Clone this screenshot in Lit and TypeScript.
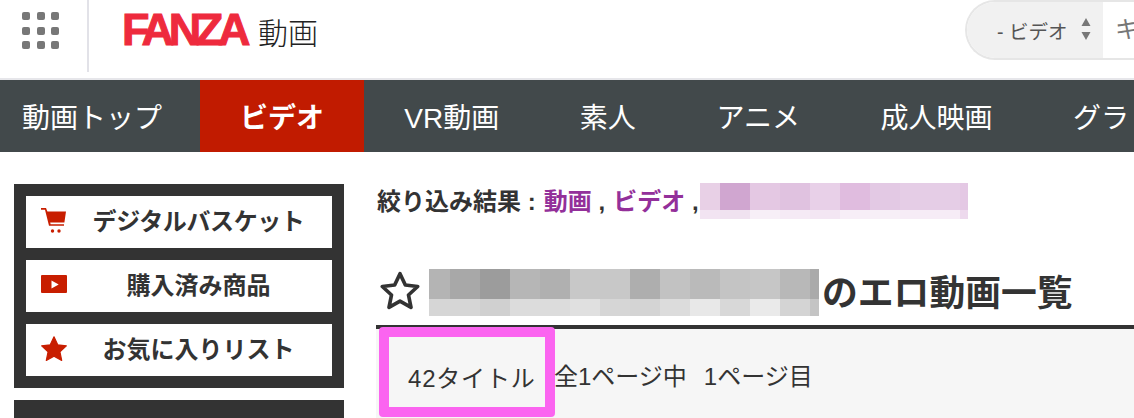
import { LitElement, html, css, svg } from "lit";
import { customElement } from "lit/decorators.js";

const greyTop = ["#b4b4b4","#a8a8a8","#9c9c9c","#b6b6b6","#b0b0b0","#c8c8c8","#c8c8c8","#aeaeae","#c2c2c2","#bababa","#c4c4c4","#c6c6c6","#b8b8b8","#aaaaaa"];
const greyBot = ["#d6d6d6","#d6d6d6","#d0d0d0","#dcdcdc","#dcdcdc","#e0e0e0","#d6d6d6","#d4d4d4","#dcdcdc","#e8e8e8","#d8d8d8","#eaeaea","#d4d4d4","#c4c4c4"];
const greyW = [21,30,30,30,30,30,30,30,30,30,30,30,30,9];
const purpTop = ["#e8d0e6","#d0a6d0","#e4c8e3","#e0c2e0","#e8d0e8","#e0bcdf","#e3c9e4","#e5cde6","#e5cde6","#e4c8e4"];
const purpBot = ["#f2e4f2","#f0e2f0","#f7eff7","#f5eaf5","#f3e6f3","#f7eef7","#f7eff7","#f6ecf6","#f6ecf6","#edd9ed"];
const purpW = [20,30,30,30,30,30,30,30,30,8];

const navItems = ["動画トップ","ビデオ","VR動画","素人","アニメ","成人映画","グラ"];

const starPts = "12,1.6 15.2,8.4 22.6,9.3 17.1,14.4 18.6,21.8 12,18.1 5.4,21.8 6.9,14.4 1.4,9.3 8.8,8.4";

@customElement("app-root")
export class AppRoot extends LitElement {
  static styles = css`
    :host { display: block; width: 1134px; height: 418px; overflow: hidden; background: #fff; font-family: "Liberation Sans", "Noto Sans CJK JP", sans-serif; color: #333; }
    .top { display: flex; align-items: flex-start; height: 78px; border-bottom: 2px solid #e6e6ea; }
    .apps { display: grid; grid-template-columns: repeat(3, 8px); gap: 6.5px; margin: 12px 28px 0 22px; }
    .apps i { width: 8px; height: 8px; border-radius: 2px; background: #777; display: block; }
    .vline { width: 2px; height: 72px; background: #e2e2e8; }
    .logo { display: flex; align-items: center; margin: 6px 0 0 33px; height: 48px; }
    .fanza { width: 125px; font-weight: 700; font-size: 45px; line-height: 48px; letter-spacing: -5.4px; color: #ee2a3d; -webkit-text-stroke: 1px #ee2a3d; white-space: nowrap; }
    .svc { margin-left: 11px; padding-top: 8px; font-size: 30px; line-height: 48px; font-weight: 300; color: #222; white-space: nowrap; }
    .search { margin-left: auto; display: flex; width: 169px; height: 60px; flex: none; box-sizing: border-box; border: 2px solid #e6e6e6; border-right: 0; border-radius: 30px 0 0 30px; overflow: hidden; }
    .sel { flex: none; width: 136px; background: #f1f1f1; display: flex; align-items: center; padding-left: 30px; box-sizing: border-box; font-size: 19.5px; color: #555; white-space: nowrap; gap: 14px; }
    .sel svg { display: block; flex: none; margin-top: -3px; }
    .kw { flex: none; width: 31px; padding-left: 12px; box-sizing: border-box; font-size: 24px; line-height: 56px; color: #777; white-space: nowrap; }
    nav { display: flex; height: 72px; background: #42494b; overflow: hidden; }
    nav a { flex: none; display: flex; align-items: center; padding: 0 40.3px; font-size: 28px; color: #fff; white-space: nowrap; }
    nav a:first-child { padding-left: 22px; padding-right: 38px; }
    nav a.on { background: #c11b00; font-weight: 700; padding: 0 40px; }
    .body { display: flex; gap: 32px; padding-left: 14px; }
    .side { flex: none; width: 330px; margin-top: 32px; display: flex; flex-direction: column; gap: 12px; }
    .box { background: #333; padding: 12px; display: flex; flex-direction: column; gap: 12px; }
    .box.next { height: 60px; }
    .row { background: #fff; height: 52px; display: flex; align-items: center; padding-left: 14px; }
    .ic { flex: none; width: 28px; height: 28px; display: block; }
    .ic.st { margin-top: -3px; }
    .row span { flex: 1; margin-left: -3px; text-align: center; font-size: 24px; font-weight: 700; color: #333; line-height: 51px; height: 52px; white-space: nowrap; }
    .row span.tight { letter-spacing: -0.4px; }
    .main { flex: 1; min-width: 0; padding-top: 31px; }
    .filter { display: flex; align-items: center; height: 36px; line-height: 38px; font-size: 24px; font-weight: 700; white-space: pre; padding-left: 1px; }
    .filter b { color: #93309a; font-weight: 700; margin-left: 1.5px; }
    .filter span { align-self: flex-start; }
    .mosaic { display: flex; flex-direction: column; flex: none; }
    .mosaic div { display: flex; }
    .mosaic i { display: block; height: 100%; flex: none; }
    .m-p { margin-left: 1px; }
    .m-p .a { height: 27px; } .m-p .b { height: 9px; }
    .m-g .a { height: 30px; } .m-g .b { height: 17px; }
    h1 { margin: 50px 0 0; display: flex; align-items: center; height: 47px; padding: 0 0 9px 4px; border-bottom: 4px solid #333; font-size: 35.8px; font-weight: 700; color: #333; white-space: nowrap; }
    h1 svg { flex: none; width: 40px; height: 40px; margin: -4px 9px 0 0; }
    h1 em { font-style: normal; margin: -6px 0 0 3px; }
    .info { display: flex; background: #f6f6f6; height: 100px; font-size: 24px; color: #333; white-space: pre; }
    .hl { flex: none; box-sizing: border-box; width: 176px; height: 90px; margin: -2px -1px 0 3px; border: 10px solid #fb64f0; border-radius: 4px; display: flex; align-items: center; padding: 8px 0 0 19px; letter-spacing: 0.8px; }
    .pages { margin-top: 30px; height: 36px; line-height: 36px; word-spacing: 1.8px; }
  `;

  private mosaic(cls: string, top: string[], bot: string[], w: number[]) {
    const row = (c: string, cols: string[]) => html`<div class=${c}>${cols.map((b, i) => html`<i style="width:${w[i]}px;background:${b}"></i>`)}</div>`;
    return html`<div class="mosaic ${cls}">${row("a", top)}${row("b", bot)}</div>`;
  }

  render() {
    return html`
      <div class="top">
        <div class="apps">${Array.from({ length: 9 }, () => html`<i></i>`)}</div>
        <div class="vline"></div>
        <div class="logo"><span class="fanza">FANZA</span><span class="svc">動画</span></div>
        <div class="search">
          <div class="sel">- ビデオ<svg width="10" height="22" viewBox="0 0 10 22"><path d="M5 0 9.5 8H.5zM5 22 .5 14h9z" fill="#777"/></svg></div>
          <div class="kw">キ</div>
        </div>
      </div>
      <nav>${navItems.map((n, i) => html`<a class=${i === 1 ? "on" : ""}>${n}</a>`)}</nav>
      <div class="body">
        <div class="side">
          <div class="box">
            <div class="row">
              <svg class="ic" viewBox="0 0 28 28">${svg`<path d="M1 0h5l1.4 3.4H26l-1.6 11H10.2l.4 1.8H24v1.6H9L5 1.8H1z" fill="#c81e00"/><circle cx="12.5" cy="23" r="1.7" fill="#c81e00"/><circle cx="19" cy="23" r="1.7" fill="#c81e00"/>`}</svg>
              <span class="tight">デジタルバスケット</span>
            </div>
            <div class="row">
              <svg class="ic" viewBox="0 0 28 28">${svg`<rect x="1" y="3" width="26" height="18" rx="1" fill="#c81e00"/><path d="M11.5 8.5v8l7.2-4z" fill="#fff"/>`}</svg>
              <span>購入済み商品</span>
            </div>
            <div class="row">
              <svg class="ic st" viewBox="0 0 24 24">${svg`<polygon points=${starPts} fill="#c81e00" stroke="#c81e00" stroke-width="1" stroke-linejoin="round"/>`}</svg>
              <span>お気に入りリスト</span>
            </div>
          </div>
          <div class="box next"></div>
        </div>
        <div class="main">
          <div class="filter"><span>絞り込み結果 : <b>動画</b> , <b>ビデオ</b> ,</span>${this.mosaic("m-p", purpTop, purpBot, purpW)}</div>
          <h1>
            <svg viewBox="0 0 24 24">${svg`<polygon points=${starPts} fill="none" stroke="#333" stroke-width="2.2" stroke-linejoin="round"/>`}</svg>
            ${this.mosaic("m-g", greyTop, greyBot, greyW)}<em>のエロ動画一覧</em>
          </h1>
          <div class="info">
            <div class="hl">42タイトル</div>
            <div class="pages">全1ページ中  1ページ目</div>
          </div>
        </div>
      </div>
    `;
  }
}
